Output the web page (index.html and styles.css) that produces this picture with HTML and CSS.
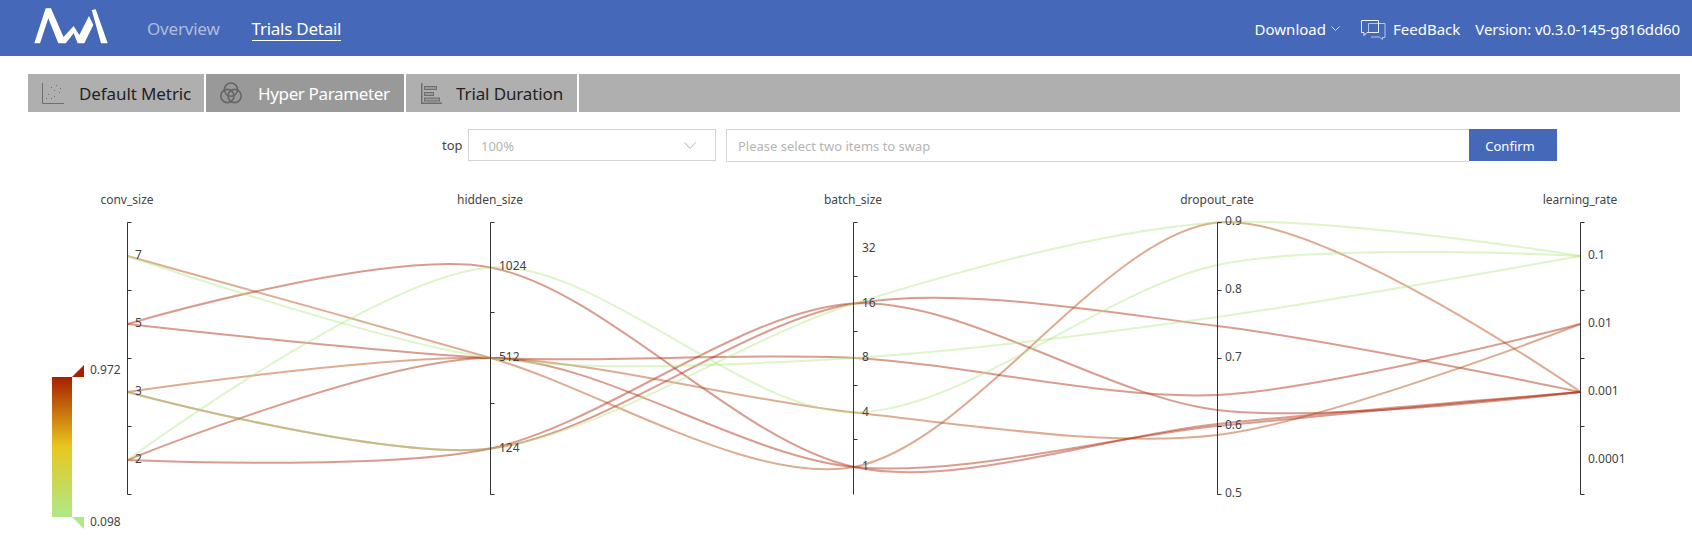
FILE: index.html
```html
<!DOCTYPE html>
<html lang="en">
<head>
<meta charset="utf-8">
<title>Trials Detail</title>
<link rel="stylesheet" href="styles.css">
</head>
<body>
<header class="header">
  <svg class="logo" width="76" height="38" viewBox="33 7 76 38" aria-label="NNI">
    <path class="logo-mark" d="M34.3 43.3 45.7 8.300H51L63.500 37 73.700 26 79.300 35 89 16 93.300 25 84.300 43.300H77.700L73.700 33.300 65.700 43.300H58.300L48.300 18.300 40 43.300Z"/>
    <path class="logo-mark" d="M91.700 10 95.700 9.300 107.700 43.300H101Z"/>
  </svg>
  <nav class="nav">
    <a class="nav-link nav-plain">Overview</a>
    <a class="nav-link nav-active">Trials Detail</a>
  </nav>
  <div class="header-right">
    <span class="head-text">Download</span>
    <svg class="chev" width="9" height="6" viewBox="0 0 9 6"><path d="M.5.5 4.5 4.5 8.5.5"/></svg>
    <svg class="feedback-icon" width="25" height="20" viewBox="0 0 25 20">
      <path class="bubble-back" d="M7.5 13V3.5H24V17.5H21.5V19.5L18.5 17H10"/>
      <path class="bubble-front" d="M.5.5H17.5V12.5H6L3 15.5V12.5H.5Z"/>
    </svg>
    <span class="head-text feedback">FeedBack</span>
    <span class="head-text version">Version: v0.3.0-145-g816dd60</span>
  </div>
</header>

<div class="tabs">
  <div class="tab tab-metric">
    <svg class="tab-icon" width="22" height="21" viewBox="0 0 22 21">
      <path class="icon-axis" d="M.5 0V20.5H22"/>
      <g class="icon-dots">
        <rect x="9" y="4" width="1" height="1"/><rect x="14" y="2" width="1" height="1"/><rect x="18" y="5" width="1" height="1"/>
        <rect x="12" y="7" width="1" height="1"/><rect x="17" y="9" width="1" height="1"/><rect x="6" y="11" width="1" height="1"/>
        <rect x="12" y="13" width="1" height="1"/><rect x="4" y="15" width="1" height="1"/><rect x="9" y="15" width="1" height="1"/>
      </g>
    </svg>
    <span>Default Metric</span>
  </div>
  <div class="tab tab-hyper tab-active">
    <svg class="tab-icon" width="22" height="22" viewBox="0 0 22 22">
      <g class="icon-venn">
        <circle cx="11" cy="7.6" r="6.6"/><circle cx="7.4" cy="14" r="6.6"/><circle cx="14.6" cy="14" r="6.6"/>
      </g>
    </svg>
    <span>Hyper Parameter</span>
  </div>
  <div class="tab tab-duration">
    <svg class="tab-icon" width="21" height="21" viewBox="0 0 21 21">
      <path class="icon-thick" d="M.75 0V20.25H21"/>
      <rect class="icon-bar" x="3.5" y="3.5" width="12" height="3"/>
      <rect class="icon-bar" x="3.5" y="9.5" width="9" height="3"/>
      <rect class="icon-bar" x="3.5" y="15" width="15" height="3"/>
    </svg>
    <span>Trial Duration</span>
  </div>
  <div class="tab-fill"></div>
</div>

<div class="controls">
  <span class="top-label">top</span>
  <div class="select">
    <span>100%</span>
    <svg class="select-chev" width="12" height="7" viewBox="0 0 12 7"><path d="M.5.5 6 6.5 11.5.5"/></svg>
  </div>
  <div class="swap-input">Please select two items to swap</div>
  <button class="confirm">Confirm</button>
</div>

<svg class="chart" width="1692" height="386" viewBox="0 162 1692 386">
  <defs>
    <linearGradient id="scale" x1="0" y1="0" x2="0" y2="1">
      <stop offset="0" stop-color="#a81e00"/>
      <stop offset=".5" stop-color="#e8c81e"/>
      <stop offset="1" stop-color="#aee888"/>
    </linearGradient>
  </defs>

  <rect x="52" y="377" width="20" height="140" fill="url(#scale)"/>
  <path class="tri-top" d="M72 377H84V365Z"/>
  <path class="tri-bottom" d="M72 517H84V529Z"/>
  <text class="label" x="90" y="374">0.972</text>
  <text class="label" x="90" y="526">0.098</text>

  <g id="trials"></g>

  <path class="axis" d="M131.500 222.500H127.500V494.500H131.500M127.500 290.500H131.500M127.500 358.500H131.500M127.500 426.500H131.500"/>
  <path class="axis" d="M494.500 222.500H490.500V494.500H494.500M490.500 312.500H494.500M490.500 403.500H494.500"/>
  <path class="axis" d="M857.500 222.500H853.500V494.500M853.500 276.500H857.500M853.500 331.500H857.500M853.500 385.500H857.500M853.500 439.500H857.500"/>
  <path class="axis" d="M1221.500 222.500H1217.500V494.500H1221.500M1217.500 290.500H1221.500M1217.500 358.500H1221.500M1217.500 426.500H1221.500"/>
  <path class="axis" d="M1584.500 222.500H1580.500V494.500H1584.500M1580.500 290.500H1584.500M1580.500 358.500H1584.500M1580.500 426.500H1584.500"/>

  <g class="names">
    <text x="127" y="204">conv_size</text>
    <text x="490" y="204">hidden_size</text>
    <text x="853" y="204">batch_size</text>
    <text x="1217" y="204">dropout_rate</text>
    <text x="1580" y="204">learning_rate</text>
  </g>

  <g class="label">
    <text x="135" y="259">7</text><text x="135" y="327">5</text><text x="135" y="395">3</text><text x="135" y="463">2</text>
    <text x="499" y="270">1024</text><text x="499" y="361">512</text><text x="499" y="452">124</text>
    <text x="862" y="252">32</text><text x="862" y="307">16</text><text x="862" y="361">8</text><text x="862" y="416">4</text><text x="862" y="470">1</text>
    <text x="1225" y="225">0.9</text><text x="1225" y="293">0.8</text><text x="1225" y="361">0.7</text><text x="1225" y="429">0.6</text><text x="1225" y="497">0.5</text>
    <text x="1588" y="259">0.1</text><text x="1588" y="327">0.01</text><text x="1588" y="395">0.001</text><text x="1588" y="463">0.0001</text>
  </g>
</svg>

<script src="chart.js"></script>
</body>
</html>
```

FILE: styles.css
```css
* { box-sizing: border-box; }

body {
  margin: 0;
  width: 1692px;
  height: 548px;
  overflow: hidden;
  background: #fff;
  font-family: "Noto Sans", "Open Sans", sans-serif;
  color: #333;
}

.header {
  display: flex;
  align-items: center;
  height: 56px;
  padding: 0 12px 0 33px;
  background: #4668b8;
}

.logo { display: block; margin-top: -4px; }
.logo-mark { fill: #fff; }

.nav { display: flex; gap: 32px; margin: 3px 0 0 38px; }
.nav-link { font-size: 17px; line-height: 22px; color: #aebcdc; border-bottom: 1px solid transparent; }
.nav-plain { letter-spacing: -.2px; }
.nav-active { color: #fff; border-bottom-color: #fff; letter-spacing: -.25px; }

.header-right { display: flex; align-items: center; margin-left: auto; margin-top: 2px; color: #fff; }
.head-text { font-size: 15px; line-height: 22px; white-space: nowrap; }
.chev { margin-left: 5px; fill: none; stroke: #d4dcf0; }
.feedback-icon { margin-left: 21px; margin-top: 1px; fill: none; stroke: #fff; }
.bubble-front { stroke: #eef2fa; fill: none; }
.bubble-back { stroke: #b8c6e6; fill: none; }
.feedback { margin-left: 7px; }
.version { margin-left: 15px; letter-spacing: -.12px; }

.tabs { display: flex; gap: 2px; height: 38px; margin: 18px 12px 0 28px; }
.tab {
  display: flex;
  align-items: center;
  background: #afafaf;
  color: #222;
  font-size: 17px;
  white-space: nowrap;
}
.tab-metric { width: 176px; padding-left: 14px; letter-spacing: -.1px; }
.tab-hyper { width: 198px; padding-left: 14px; letter-spacing: -.36px; }
.tab-duration { width: 171px; padding-left: 15px; letter-spacing: -.12px; }
.tab-active { background: #999; color: #fff; }
.tab-fill { flex: 1; background: #afafaf; }
.tab-icon { flex: none; }
.tab-metric .tab-icon { margin-right: 15px; }
.tab-hyper .tab-icon { margin-right: 16px; }
.tab-duration .tab-icon { margin-right: 14px; }
.icon-axis { fill: none; stroke: #6e6e6e; }
.icon-dots { fill: #6e6e6e; }
.icon-venn { fill: none; stroke: #666; stroke-width: 1.6; }
.icon-thick { fill: none; stroke: #6e6e6e; stroke-width: 1.5; }
.icon-bar { fill: #989898; stroke: #6e6e6e; }

.controls { display: flex; align-items: flex-start; height: 33px; margin-top: 17px; padding-left: 442px; }
.top-label { font-size: 13px; line-height: 33px; width: 26px; color: #444; }
.select {
  display: flex;
  align-items: center;
  justify-content: space-between;
  width: 248px;
  height: 32px;
  padding: 1px 19px 0 12px;
  border: 1px solid #d4d4d4;
  color: #b5b5b5;
  font-size: 13px;
}
.select-chev { fill: none; stroke: #b0b0b0; }
.swap-input {
  width: 743px;
  height: 33px;
  margin-left: 10px;
  padding-left: 11px;
  border: 1px solid #d4d4d4;
  border-right: 0;
  line-height: 32px;
  color: #b5b5b5;
  font-size: 13px;
}
.confirm {
  width: 88px;
  height: 32px;
  padding: 1px 6px 0 0;
  border: 0;
  background: #4668b8;
  color: #fff;
  font: 13px "Noto Sans", "Open Sans", sans-serif;
}

.chart { display: block; }
.axis { fill: none; stroke: #333; stroke-width: 1; }
.names text { font-size: 12px; fill: #444; text-anchor: middle; }
.label, .label text { font-size: 12px; fill: #444; }
.tri-top { fill: #a81e00; }
.tri-bottom { fill: #aee888; }
.trial { fill: none; stroke-width: 2; }
.trial-green { stroke: rgba(174, 232, 127, .42); }
.trial-red { stroke: rgba(172, 42, 14, .46); }
.trial-orange { stroke: rgba(185, 80, 30, .48); }
```

FILE: chart.js
```js
(function () {
  var AXIS_X = [127.5, 490.75, 854, 1217.25, 1580.5];
  var CONV = { 7: 256, 5: 324, 3: 392, 2: 460 };
  var HIDDEN = { 1024: 267.5, 512: 358, 124: 448.5 };
  var BATCH = { 16: 303.5, 8: 358, 4: 412.5, 1: 467 };
  var LR = { 0.1: 256, 0.01: 324, 0.001: 392 };

  // conv_size, hidden_size, batch_size, y on the dropout_rate axis, learning_rate, tone
  var TRIALS = [
    [5, 1024, 1, 424, 0.001, 'red'],
    [3, 124, 16, 326, 0.001, 'red'],
    [2, 124, 16, 410, 0.001, 'red'],
    [7, 512, 1, 222.5, 0.001, 'orange'],
    [5, 512, 8, 395, 0.01, 'red'],
    [3, 512, 4, 435, 0.01, 'orange'],
    [2, 512, 1, 426, 0.001, 'red'],
    [2, 1024, 4, 265, 0.1, 'green'],
    [7, 512, 8, 317, 0.1, 'green'],
    [3, 124, 16, 222.5, 0.1, 'green']
  ];

  var SMOOTH = 0.3;

  function curve(points) {
    var controls = [points[0]];
    for (var i = 1; i < points.length - 1; i++) {
      var p = points[i], a = points[i - 1], b = points[i + 1];
      var vx = (b[0] - a[0]) * SMOOTH, vy = (b[1] - a[1]) * SMOOTH;
      var d0 = Math.hypot(p[0] - a[0], p[1] - a[1]);
      var d1 = Math.hypot(p[0] - b[0], p[1] - b[1]);
      var sum = d0 + d1 || 1;
      controls.push([p[0] - vx * d0 / sum, p[1] - vy * d0 / sum]);
      controls.push([p[0] + vx * d1 / sum, p[1] + vy * d1 / sum]);
    }
    controls.push(points[points.length - 1]);
    var d = 'M' + points[0].join(' ');
    for (var j = 0; j < points.length - 1; j++) {
      d += 'C' + controls[2 * j].join(' ') + ' ' + controls[2 * j + 1].join(' ') + ' ' + points[j + 1].join(' ');
    }
    return d;
  }

  var host = document.getElementById('trials');
  TRIALS.forEach(function (t) {
    var ys = [CONV[t[0]], HIDDEN[t[1]], BATCH[t[2]], t[3], LR[t[4]]];
    var pts = ys.map(function (y, i) { return [AXIS_X[i], y]; });
    var path = document.createElementNS('http://www.w3.org/2000/svg', 'path');
    path.setAttribute('class', 'trial trial-' + t[5]);
    path.setAttribute('d', curve(pts));
    host.appendChild(path);
  });
})();
```
